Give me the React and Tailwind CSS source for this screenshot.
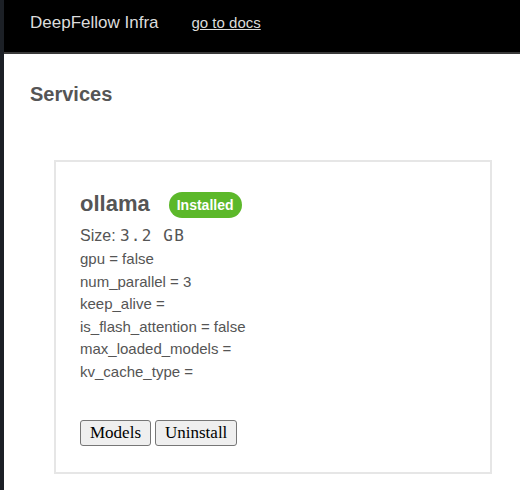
export default function App() {
  const props = [
    "gpu = false",
    "num_parallel = 3",
    "keep_alive =",
    "is_flash_attention = false",
    "max_loaded_models =",
    "kv_cache_type =",
  ];
  return (
    <div className="flex h-[490px] w-[520px] overflow-hidden bg-white" style={{ fontFamily: '"Liberation Sans", Arial, sans-serif' }}>
      <div className="w-[4px] shrink-0 bg-[#1c2026]" />
      <div className="flex flex-1 flex-col">
        <header className="flex h-[54px] shrink-0 items-center gap-[33px] border-b-2 border-[#3a3a3a] bg-black pl-[26px] pb-[6px]">
          <span className="text-[17px] text-[#dcdcdc]">DeepFellow Infra</span>
          <a className="text-[15px] text-[#dcdcdc] underline">go to docs</a>
        </header>
        <h1 className="ml-[26px] mt-[26px] text-[20px] font-bold leading-[28px] text-[#555]">Services</h1>
        <div className="ml-[50px] mt-[52px] flex w-[438px] flex-col border-2 border-[#e6e6e6] px-[24px] pt-[28px] pb-[26px] text-[#555]">
          <div className="flex items-center gap-[19px]">
            <span className="text-[22px] font-bold leading-[28px]">ollama</span>
            <span className="mt-[1px] rounded-[13px] bg-[#5cb82a] px-[8px] py-[3px] text-[14px] font-bold leading-[20px] text-white">Installed</span>
          </div>
          <div className="mt-[6px] text-[16px] leading-[24px]">
            Size:{" "}
            <span style={{ fontFamily: '"DejaVu Sans Mono", monospace' }} className="text-[16px] tracking-[1.2px]">3.2 GB</span>
          </div>
          <div className="flex flex-col text-[15px] leading-[22.6px]">
            {props.map((p) => (
              <div key={p}>{p}</div>
            ))}
          </div>
          <div className="mt-[36px] flex gap-[4px]" style={{ fontFamily: '"Liberation Serif", "Times New Roman", serif' }}>
            <button className="rounded-[3px] border border-[#767676] bg-[#efefef] px-[9px] py-[2px] text-[17px] leading-[20px] text-black">Models</button>
            <button className="rounded-[3px] border border-[#767676] bg-[#efefef] px-[9px] py-[2px] text-[17px] leading-[20px] text-black">Uninstall</button>
          </div>
        </div>
      </div>
    </div>
  );
}
